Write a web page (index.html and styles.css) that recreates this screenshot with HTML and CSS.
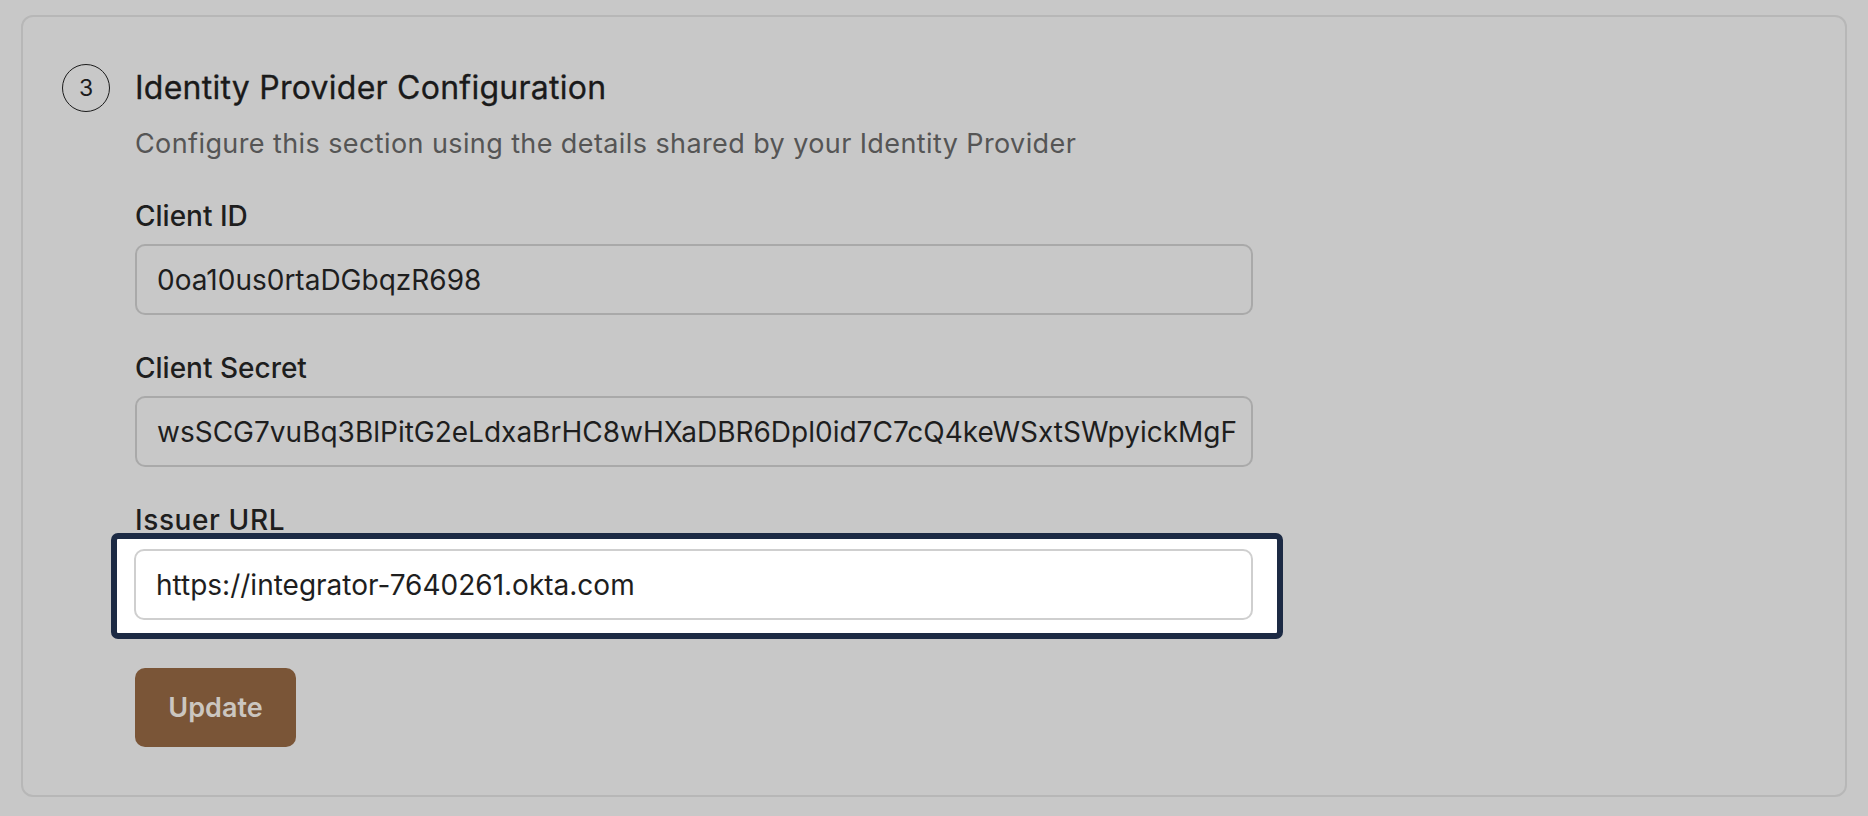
FILE: index.html
```html
<!DOCTYPE html>
<html lang="en">
<head>
<meta charset="utf-8">
<title>Identity Provider Configuration</title>
<link rel="stylesheet" href="styles.css">
</head>
<body>
<section class="card">
  <div class="header">
    <div class="step">3</div>
    <h2 class="title">Identity Provider Configuration</h2>
  </div>
  <div class="body">
    <p class="subtitle">Configure this section using the details shared by your Identity Provider</p>
    <div class="field">
      <label class="label" for="cid">Client ID</label>
      <input class="input" id="cid" type="text" value="0oa10us0rtaDGbqzR698" readonly>
    </div>
    <div class="field">
      <label class="label" for="csec">Client Secret</label>
      <input class="input" id="csec" type="text" value="wsSCG7vuBq3BlPitG2eLdxaBrHC8wHXaDBR6Dpl0id7C7cQ4keWSxtSWpyickMgF" readonly>
    </div>
    <div class="field">
      <label class="label label-tight" for="iss">Issuer URL</label>
      <div class="spotlight">
        <input class="input input-active" id="iss" type="text" value="https://integrator-7640261.okta.com" readonly>
      </div>
    </div>
    <button class="btn" type="button">Update</button>
  </div>
</section>
</body>
</html>
```

FILE: styles.css
```css
html, body {
  margin: 0;
  padding: 0;
  background: #c8c8c8;
}
body {
  font-family: Inter, "Noto Sans", sans-serif;
  color: #1c1c1c;
  padding: 15px 21px 19px 21px;
  height: 816px;
  box-sizing: border-box;
}
.card {
  border: 2px solid #b7b7b7;
  border-radius: 12px;
  height: 100%;
  box-sizing: border-box;
  padding: 47px 40px 0 39px;
}
.header {
  display: flex;
  align-items: center;
  gap: 25px;
}
.step {
  width: 48px;
  height: 48px;
  box-sizing: border-box;
  border: 1.8px solid #1c1c1c;
  border-radius: 50%;
  display: flex;
  align-items: center;
  justify-content: center;
  font-size: 23px;
  color: #1c1c1c;
  flex-shrink: 0;
}
.title {
  margin: 0;
  font-size: 32px;
  font-weight: 400;
  letter-spacing: 0.25px;
  line-height: 36px;
  color: #1a1a1a;
  -webkit-text-stroke: 0.3px #1a1a1a;
}
.body {
  margin-left: 73px;
  width: 1118px;
}
.subtitle {
  margin: 15px 0 0 0;
  font-size: 27px;
  letter-spacing: 0.4px;
  line-height: 34px;
  color: #555555;
}
.field {
  margin-top: 39px;
}
.field + .field {
  margin-top: 37px;
}
.label {
  display: block;
  font-size: 28px;
  font-weight: 500;
  line-height: 32px;
  color: #1e1e1e;
  margin-bottom: 12px;
}
.label-tight {
  margin-bottom: -3px;
  letter-spacing: 0.6px;
}
.input {
  display: block;
  width: 100%;
  height: 71px;
  box-sizing: border-box;
  border: 2px solid #a9a9a9;
  border-radius: 10px;
  background: transparent;
  padding: 0 8px 0 20px;
  font-family: Inter, "Noto Sans", sans-serif;
  font-size: 28px;
  color: #1e1e1e;
  outline: none;
}
.spotlight {
  margin: 0 -30px 0 -24px;
  border: 6px solid #1c2a44;
  border-radius: 7px;
  background: #ffffff;
  padding: 10px 24px 13px 17px;
}
.input-active {
  border-color: #cfcfcf;
  background: #ffffff;
}
.btn {
  margin-top: 29px;
  width: 161px;
  height: 79px;
  border: none;
  border-radius: 10px;
  background: #7a5537;
  color: #cbc6c0;
  font-family: Inter, "Noto Sans", sans-serif;
  font-size: 27px;
  font-weight: 600;
  padding: 0;
}
```
